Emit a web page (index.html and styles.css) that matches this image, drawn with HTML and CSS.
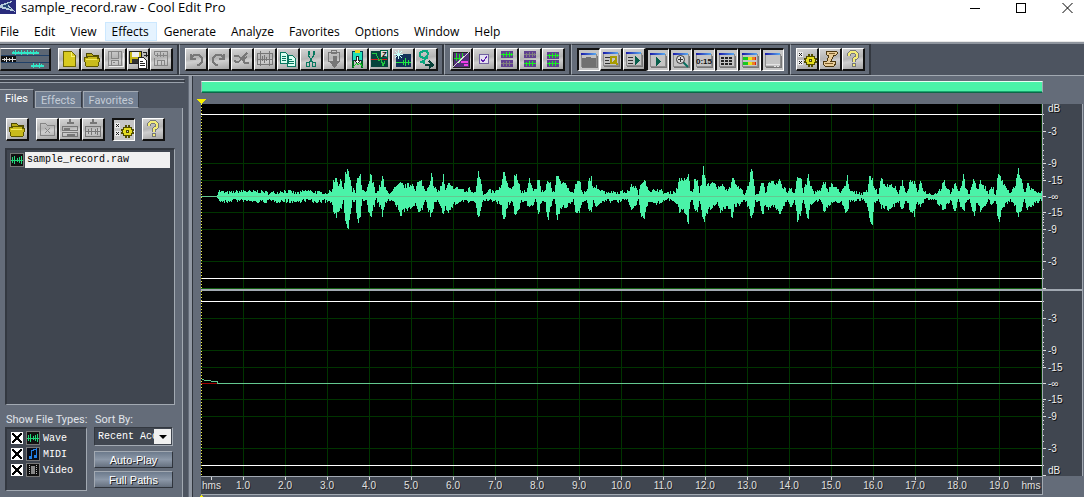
FILE: index.html
```html
<!DOCTYPE html>
<html lang="en">
<head>
<meta charset="utf-8">
<title>sample_record.raw - Cool Edit Pro</title>
<link rel="stylesheet" href="styles.css">
</head>
<body>
<svg class="defs" aria-hidden="true">
  <linearGradient id="cap"><stop offset="0" stop-color="#1818a8"/><stop offset="1" stop-color="#58a8f0"/></linearGradient>
  <symbol id="i-folder" viewBox="0 0 20 20"><path d="M4 7V4h5l2 2h5v4M4 7v9" fill="#b8aa18" stroke="#4c4700"/><path d="M2 8h3v-1h10v2h3l-2 8H4z" fill="#c9bb1c" stroke="#5c5600"/><path d="M4 10h11" stroke="#f4ea60"/></symbol>
  <symbol id="i-win" viewBox="0 0 20 20"><path d="M2.500 4.500h15v12h-15z" fill="#c4c4c4" stroke="#8c8c8c"/><path d="M3 17.500h15v-12" fill="none" stroke="#777"/><path d="M2 3h15v2H2z" fill="url(#cap)"/></symbol>
  <symbol id="i-gear" viewBox="0 0 20 20"><path d="M1 3h5v5H1zM1 11h5v5H1z" fill="#eee"/><path d="M2 4l3 3M5 4L2 7M2 12l3 3M5 12l-3 3" stroke="#222"/><path d="M9 7h2V5h1v2h2V5h1v2h2v2h2v1h-1v2h1v1h-2v2h-2v2h-1v-2h-2v2h-1v-2H9v-2H7v-1h1v-2H7V9h2z" fill="#e4dc20" stroke="#504c00"/><path d="M12 10h2v2h-2z" fill="#ccc" stroke="#504c00"/></symbol>
  <symbol id="i-help" viewBox="0 0 20 20"><path d="M6 7V5l2-2h4l2 2v3l-3 2v3" fill="none" stroke="#777" stroke-width="4"/><path d="M9 14h4v4H9z" fill="#777"/><path d="M6 7V5l2-2h4l2 2v3l-3 2v3M11 15v2" fill="none" stroke="#f4ec78" stroke-width="2"/></symbol>
  <symbol id="i-wave" viewBox="0 0 14 14"><path d="M.5.5h13v13H.5z" fill="#111" stroke="#777"/><path d="M1 7h12M2.500 4v6M4.500 3v8M7.500 5v4M9.500 4v6M11.500 3v8" stroke="#20d878" fill="none"/></symbol>
</svg>
<div class="app">
  <header class="titlebar">
    <svg class="app-icon" viewBox="0 0 16 14" aria-hidden="true"><path d="M0 0h16v14H0z" fill="#2a2c7c"/><path d="M0 5L14 0l-6 5 8 7-16-4z" fill="#b8ccdc"/><path d="M2 6l10-4-5 4 6 4z" fill="#284878"/></svg>
    <h1 class="title">sample_record.raw - Cool Edit Pro</h1>
    <div class="win-buttons">
      <button aria-label="Minimize"><svg viewBox="0 0 11 11"><path d="M0 6.500h10" stroke="#000"/></svg></button>
      <button aria-label="Maximize"><svg viewBox="0 0 11 11"><path d="M.5 1.500h9v9h-9z" fill="none" stroke="#000"/></svg></button>
      <button aria-label="Close"><svg viewBox="0 0 11 11"><path class="smooth" d="M.5 1l10 10M10.500 1L.5 11" stroke="#000"/></svg></button>
    </div>
  </header>
  <nav class="menubar">
    <button>File</button><button>Edit</button><button>View</button><button class="hot">Effects</button><button>Generate</button><button>Analyze</button><button>Favorites</button><button>Options</button><button>Window</button><button>Help</button>
  </nav>

  <div class="toolbar">
    <div class="group first">
      <button class="tool multitrack" aria-label="Multitrack view"><svg viewBox="0 0 48 20"><path d="M0 0h48v20H0z" fill="#5c6673"/><path d="M0 6.500h48M0 13.500h48" stroke="#204068"/><path d="M0 7h15v6H0z" fill="#111"/><path d="M11 3.500h27M30 16.500h13" stroke="#30e8c8" stroke-width="2"/><path d="M12.500 2v3M14.500 1v5M17.500 2v3M20.500 1v5M23.500 2v3M26.500 1v5M29.500 2v3M32.500 1v5M35.500 2v3M32.500 14v5M35.500 15v3M38.500 14v5M40.500 15v3" stroke="#30e8c8"/><path d="M1 10.500h14M3.500 9v3M5.500 8v5M8.500 9v3M11.500 8v5" stroke="#ddd"/></svg></button>
      <div class="row">
        <button class="tool" aria-label="New"><svg viewBox="0 0 20 20"><path d="M4.500 2.500h8l4 4v11h-12z" fill="#d8ca20" stroke="#6c6400"/><path d="M12 3v4h4" fill="none" stroke="#f8f070"/></svg></button>
        <button class="tool" aria-label="Open"><svg><use href="#i-folder"/></svg></button>
        <button class="tool" aria-label="Save"><svg viewBox="0 0 20 20" fill="none" stroke="#858585"><path d="M3.500 2.500h13v14h-13zM6.500 3v6h7V3M6.500 16v-5h7v5M8 13h2"/><path d="M4 17.500h14v-14" stroke="#eee"/></svg></button>
        <button class="tool" aria-label="Save as"><svg viewBox="0 0 20 20"><path d="M1.500 2.500h12v12h-12z" fill="#c8b818" stroke="#222"/><path d="M4 3h7v5H4z" fill="#eee"/><path d="M4 10h6v4H4z" fill="#333"/><path d="M10.500 8.500h5l3 3v8h-8z" fill="#fff" stroke="#222"/><path d="M12 12.500h3M12 14.500h5M12 16.500h5M15 3.500h3v4M16 6.500h4" fill="none" stroke="#222"/></svg></button>
        <button class="tool" aria-label="Save selection"><svg viewBox="0 0 20 20" fill="none" stroke="#858585"><path d="M3.500 8.500v8h13v-14h-13v3M6.500 16v-5h7v5M10.500 12v4M4 6.500h12M6.500 4v4M9.500 3v5M12.500 4v4"/></svg></button>
      </div>
    </div>
    <div class="group">
      <button class="tool" aria-label="Undo"><svg viewBox="0 0 20 20" fill="none" stroke="#777" stroke-width="2"><path d="M5 5v5h5M5 9l3-3h5l3 3v4l-3 3h-2"/></svg></button>
      <button class="tool" aria-label="Redo"><svg viewBox="0 0 20 20" fill="none" stroke="#777" stroke-width="2"><path d="M15 5v5h-5M15 9l-3-3H7l-3 3v4l3 3h2"/></svg></button>
      <button class="tool" aria-label="Repeat"><svg viewBox="0 0 20 20" fill="none" stroke="#777"><path d="M2 6.500h4l3 3h2M9 10l6-6M10 11l5-3M3 12.500h4l2-2M3 11v2M11 11l2 3h4" stroke-width="2"/></svg></button>
      <button class="tool" aria-label="Trim"><svg viewBox="0 0 20 20" fill="none" stroke="#777"><path d="M2.500 4.500h15v11h-15zM5.500 2v15M14.500 2v15M2 10.500h16M7.500 7v5M9.500 6v8M11.500 8v4"/></svg></button>
      <button class="tool" aria-label="Copy"><svg viewBox="0 0 20 20" fill="#d8fff0" stroke="#087860"><path d="M2.500 3.500h5l3 3v8h-8zM9.500 6.500h5l3 3v8h-8z"/><path d="M4 7.500h4M4 9.500h4M4 11.500h4M11 10.500h3M11 12.500h5M11 14.500h5"/></svg></button>
      <button class="tool" aria-label="Cut"><svg viewBox="0 0 20 20" fill="none" stroke="#087860"><path d="M7 2v4l5 8M13 2v4l-5 8M8 2v4M12 2v4"/><path d="M5.500 13.500h3v4h-3zM11.500 13.500h3v4h-3z"/></svg></button>
      <button class="tool" aria-label="Paste"><svg viewBox="0 0 20 20" fill="none" stroke="#777"><path d="M4.500 3.500h11v9h-11zM7.500 1.500h5v3h-5z"/><path d="M9 7h3v6h3l-4.500 5L6 13h3z" fill="#777"/></svg></button>
      <button class="tool" aria-label="Mix paste"><svg viewBox="0 0 20 20"><path d="M5.500 2.500h10v9h-10z" fill="#20e0b8" stroke="#045"/><path d="M8 1h5v3H8z" fill="#e8d820"/><path d="M9.500 7.500h2v4h2l-3 3-3-3h2z" fill="#fff" stroke="#222"/><path d="M5 12h2v7H5zM14 12h2v7h-2z" fill="#062"/><path d="M6 18l4-4 1 2 2-2 3 4" fill="none" stroke="#18c828"/></svg></button>
      <button class="tool" aria-label="Copy to new"><svg viewBox="0 0 20 20"><path d="M1 2h17v16H1z" fill="#06443c"/><path d="M1 10.500h16" stroke="#d02020"/><path d="M2 4h4l3 8 2-2 2 7 2-5" fill="none" stroke="#20c840"/><path d="M10.500 1.500h7v7h-7z" fill="#ddd" stroke="#064"/><text class="glyph" x="12" y="8">Z</text></svg></button>
      <button class="tool" aria-label="Convert sample type"><svg viewBox="0 0 20 20"><path d="M3 5h15v13H3z" fill="#103058"/><path d="M3 13.500h15M10.500 11v5M12.500 9v8M15.500 11v5" stroke="#20e840"/><path d="M1 5.500h9M5.500 1v9M2 2l7 7M9 2L2 9" stroke="#c8fff8"/></svg></button>
      <button class="tool" aria-label="Go to multitrack"><svg viewBox="0 0 20 20" fill="none" stroke="#08a880" stroke-width="2"><path d="M12 9H7L4 7V4l3-2h4l1 3-4 7-4 1M6 12l3 3"/><path d="M9 16h7M13 12l4 4-4 3" stroke="#064038"/></svg></button>
    </div>
    <div class="group">
      <button class="tool" aria-label="Spectral view"><svg viewBox="0 0 20 20"><path d="M2 3h16v15H2z" fill="#503078" stroke="#222"/><path d="M3 9.500h8M5.500 4v8M8.500 5v9M11.500 4v6" stroke="#18e020"/><path d="M10 13h7M13 16h4" stroke="#f040e8" stroke-width="2"/><path d="M2 18L18 3" stroke="#ddd"/></svg></button>
      <button class="tool" aria-label="Settings"><svg viewBox="0 0 20 20"><path d="M5.500 5.500h9v9h-9z" fill="#e4e0f0" stroke="#7060a0"/><path d="M7 10l2 3 4-6" fill="none" stroke="#6020b0"/></svg></button>
      <button class="tool" aria-label="Edit left channel"><svg viewBox="0 0 20 20"><path d="M4 2h12v7H4zM4 11h12v7H4z" fill="#604090"/><path d="M4 5.500h12M6.500 4v4M9.500 3v5M12.500 3v5M14.500 4v3" stroke="#18f020"/><path d="M4 14.500h12M6.500 13v4M9.500 12v5M12.500 12v5" stroke="#808080"/></svg></button>
      <button class="tool" aria-label="Edit right channel"><svg viewBox="0 0 20 20"><path d="M4 2h12v7H4zM4 11h12v7H4z" fill="#604090"/><path d="M4 5.500h12M6.500 4v4M9.500 3v5M12.500 3v5M14.500 4v3" stroke="#808080"/><path d="M4 14.500h12M6.500 13v4M9.500 12v5M12.500 12v5" stroke="#18f020"/></svg></button>
      <button class="tool" aria-label="Edit both channels"><svg viewBox="0 0 20 20"><path d="M4 3h12v7H4zM4 11h12v7H4z" fill="#604090"/><path d="M4 6.500h12M6.500 5v4M9.500 4v5M12.500 4v5M14.500 5v3M4 14.500h12M6.500 13v4M9.500 12v5M12.500 12v5" stroke="#18f020"/></svg></button>
    </div>
    <div class="group">
      <button class="tool pressed" aria-label="Organizer"><svg viewBox="0 0 20 20"><use href="#i-win"/><path d="M3 8h3l1-1h4l1 1h5v9H3z" fill="#707070"/></svg></button>
      <button class="tool" aria-label="Cue list"><svg viewBox="0 0 20 20"><use href="#i-win"/><path d="M4 8.500h5M4 11.500h4M4 14.500h5" stroke="#333"/><path d="M10 8h5v6h-5zM13 12l4 4" fill="none" stroke="#a89c00" stroke-width="2"/></svg></button>
      <button class="tool" aria-label="Play list"><svg viewBox="0 0 20 20"><use href="#i-win"/><path d="M4 8.500h5M4 11.500h5M4 14.500h5" stroke="#333"/><path d="M11 7l5 4-5 5z" fill="#08604c"/></svg></button>
      <button class="tool pressed" aria-label="Transport"><svg viewBox="0 0 20 20"><use href="#i-win"/><path d="M8 7l5 4-5 5z" fill="#08604c"/></svg></button>
      <button class="tool pressed" aria-label="Zoom controls"><svg viewBox="0 0 20 20"><use href="#i-win"/><path class="smooth" d="M12 12l5 5" stroke="#087060" stroke-width="2"/><circle class="smooth" cx="9.500" cy="9.500" r="4" fill="#ddd" stroke="#333"/><path d="M7 9.500h5M9.500 7v5" stroke="#333"/></svg></button>
      <button class="tool pressed" aria-label="Time window"><svg viewBox="0 0 20 20"><use href="#i-win"/><text class="glyph" x="2" y="14">0:15</text></svg></button>
      <button class="tool pressed" aria-label="Selection view"><svg viewBox="0 0 20 20"><use href="#i-win"/><path d="M4 8h3M8 8h3M12 8h3M4 11h3M8 11h3M12 11h3M4 14h3M8 14h3M12 14h3" stroke="#222" stroke-width="2"/></svg></button>
      <button class="tool pressed" aria-label="Level meters"><svg viewBox="0 0 20 20"><use href="#i-win"/><path d="M3 7h5v3H3zM3 12h5v3H3z" fill="#18c820"/><path d="M8 7h4v3H8zM8 12h4v3H8z" fill="#e8e020"/><path d="M12 7h3v3h-3zM12 12h3v3h-3z" fill="#f08020"/><path d="M15 7h1v3h-1zM15 12h1v3h-1z" fill="#d02020"/></svg></button>
      <button class="tool pressed" aria-label="Status bar"><svg viewBox="0 0 20 20"><use href="#i-win"/><path d="M3 14.500h14M11 16h2M14 16h2" stroke="#e4e4e4"/></svg></button>
    </div>
    <div class="group">
      <button class="tool" aria-label="Options"><svg><use href="#i-gear"/></svg></button>
      <button class="tool" aria-label="Scripts"><svg viewBox="0 0 20 20"><path d="M6 3l2-1h8l2 2-2 2h-2l-3 6h4l1 2-2 3H5l-2-2 1-3h3l2-6H7z" fill="#e8cc98" stroke="#4c3810"/><path d="M9 4.500h6M5 14.500h8" stroke="#80602c"/></svg></button>
      <button class="tool" aria-label="Help"><svg><use href="#i-help"/></svg></button>
    </div>
  </div>

  <div class="workspace">
    <aside class="organizer">
      <div class="grip"></div>
      <div class="tabs"><button class="tab active">Files</button><button class="tab">Effects</button><button class="tab">Favorites</button></div>
      <div class="pane">
        <div class="pane-tools">
          <button class="tool" aria-label="Open file"><svg><use href="#i-folder"/></svg></button>
          <div class="row">
            <button class="tool" aria-label="Close file"><svg viewBox="0 0 20 20" fill="none" stroke="#858585"><path d="M3.500 16.500v-12h5l2 2h7v10zM8 9l5 5M13 9l-5 5"/></svg></button>
            <button class="tool" aria-label="Insert in multitrack"><svg viewBox="0 0 20 20" fill="none" stroke="#777"><path d="M2.500 7.500h15v4h-15zM2.500 13.500h15v4h-15z"/><path d="M4 9.500h6M7 15.500h8M10 0v4M7 3.500h7" stroke-width="2"/></svg></button>
            <button class="tool" aria-label="Edit file"><svg viewBox="0 0 20 20" fill="none" stroke="#777"><path d="M2.500 7.500h15v10h-15zM3 12.500h14M5.500 10v5M8.500 9v7M12.500 10v5M14.500 9v7"/><path d="M10 0v4M7 3.500h7" stroke-width="2"/></svg></button>
          </div>
          <button class="tool pressed" aria-label="Advanced options"><svg><use href="#i-gear"/></svg></button>
          <button class="tool" aria-label="Help"><svg><use href="#i-help"/></svg></button>
        </div>
        <ul class="files well">
          <li><svg class="type"><use href="#i-wave"/></svg><span>sample_record.raw</span></li>
        </ul>
        <div class="filters">
          <fieldset>
            <legend>Show File Types:</legend>
            <div class="types well">
              <label><input type="checkbox" checked><svg class="type"><use href="#i-wave"/></svg>Wave</label>
              <label><input type="checkbox" checked><svg class="type" viewBox="0 0 14 14"><path d="M.5.5h13v13H.5z" fill="#080c18" stroke="#777"/><path d="M5 11V4l5-2v7" fill="none" stroke="#2080e8"/><path d="M3 9h3v3H3zM8 8h3v3H8z" fill="#2080e8"/></svg>MIDI</label>
              <label><input type="checkbox" checked><svg class="type" viewBox="0 0 14 14"><path d="M.5.5h13v13H.5z" fill="#111" stroke="#777"/><path d="M5 3h4v8H5z" fill="#888"/><path d="M3.500 2v10M10.500 2v10" stroke="#bbb" stroke-dasharray="1 1"/></svg>Video</label>
            </div>
          </fieldset>
          <div class="sorting">
            <label for="sort">Sort By:</label>
            <div class="combo"><select id="sort"><option>Recent Access</option><option>Name</option></select><span class="arrow"></span></div>
            <button class="wide">Auto-Play</button>
            <button class="wide">Full Paths</button>
          </div>
        </div>
      </div>
    </aside>

    <main class="editor">
      <div class="overview"></div>
      <div class="cursor-row"><svg viewBox="0 0 9 5"><path d="M0 0h9L4.500 5z" fill="#f8f000"/></svg></div>
      <div class="track">
        <svg class="plot" id="left" viewBox="0 0 841 185" preserveAspectRatio="none"></svg>
        <svg class="scale" viewBox="0 0 40 185"></svg>
      </div>
      <div class="track">
        <svg class="plot" id="right" viewBox="0 0 841 185" preserveAspectRatio="none"></svg>
        <svg class="scale" viewBox="0 0 40 185"></svg>
      </div>
      <div class="timeline" id="timeline"></div>
      <div class="cursor-row bottom"><svg viewBox="0 0 9 5"><path d="M4.500 0L9 5H0z" fill="#f8f000"/></svg></div>
    </main>
  </div>
</div>
<script src="app.js"></script>
</body>
</html>
```
FILE: styles.css
```css
* { box-sizing: border-box; }
body { margin: 0; background: #646c79; font-family: "Open Sans", sans-serif; font-size: 12px; overflow: hidden; }
button { font: inherit; color: inherit; border: 0; background: none; padding: 0; }
h1, ul, fieldset, legend { margin: 0; padding: 0; border: 0; font-size: inherit; font-weight: inherit; list-style: none; }
svg { display: block; shape-rendering: crispEdges; }
.smooth { shape-rendering: auto; }
.glyph { font: bold 8px "Liberation Sans", sans-serif; fill: #111; }
.defs { position: absolute; width: 0; height: 0; }
.app { display: flex; flex-direction: column; min-height: 100vh; }
.row { display: flex; }

.titlebar { display: flex; align-items: center; height: 22px; background: #fff; padding-bottom: 8px; }
.app-icon { width: 16px; height: 14px; }
.title { flex: 1; padding-left: 5px; font-size: 13px; line-height: 14px; color: #000; }
.win-buttons { display: flex; gap: 35px; padding-right: 11px; }
.win-buttons svg { width: 11px; height: 11px; }

.menubar { display: flex; background: #fff; height: 20px; border-bottom: 1px solid #e8e8e8; color: #000; }
.menubar button { padding: 0 7px 0 6px; line-height: 19px; border: 1px solid transparent; border-width: 0 1px 1px; }
.menubar button:first-child { padding-left: 0; border-left: 0; }
.menubar .hot { background: #e5f3ff; border: 1px solid #cce8ff; line-height: 17px; }

.toolbar { display: flex; height: 34px; background: #4d5460; border-top: 2px solid #8f959e; border-bottom: 1px solid #a2a9b2; }
.group { display: flex; align-items: center; padding: 0 4px 0 5px; background: #646c79; border-top: 1px solid #363b43; border-left: 1px solid #a2a9b2; border-right: 2px solid #333840; border-bottom: 1px solid #333840; }
.group.first { gap: 7px; padding-left: 0; border-left: 0; }
.tool { display: block; flex: none; width: 23px; height: 23px; border: 1px solid #fff; border-right: 2px solid #111; border-bottom: 2px solid #111; background: linear-gradient(170deg, #d4d4d4, #b4b4b4 45%, #cfcfcf 60%, #a4a4a4); }
.tool svg { width: 20px; height: 20px; }
.tool.pressed { border: 1px solid #fff; border-left: 2px solid #111; border-top: 2px solid #111; background: #c6c6c6; }
.multitrack { width: 51px; border-left-color: #999; }
.multitrack svg { width: 48px; }

.workspace { display: flex; flex: 1; }
.organizer { display: flex; flex-direction: column; flex: none; width: 188px; background: #4d5460; padding-right: 5px; color: #e0e4ea; }
.grip { height: 4px; margin: 3px -2px 0 0; border: 1px solid #9aa1ab; border-left: 0; border-right-color: #333840; background: #3c424c; }
.tabs { display: flex; align-items: flex-end; gap: 1px; height: 25px; padding-top: 7px; font: 11px Roboto, sans-serif; }
.tab { height: 17px; padding: 0 5px; line-height: 18px; color: #c4ccd6; background: #717e91; border: 1px solid #a2a9b2; border-right-color: #363b43; border-bottom-color: #a2a9b2; }
.tab.active { height: 19px; background: #646c79; border-bottom: 0; border-left: 0; color: #fff; }
.pane { display: flex; flex-direction: column; flex: 1; padding: 10px 7px 4px 5px; background: #646c79; border-right: 1px solid #a2a9b2; border-bottom: 1px solid #333840; }
.pane-tools { display: flex; gap: 7px; padding-left: 1px; }
.well { background: #404650; border: 2px solid #a2a9b2; border-top-color: #333840; border-left-color: #333840; border-right-width: 1px; border-bottom-width: 1px; }
.files { height: 257px; margin-top: 7px; padding: 2px 4px 0 3px; font: 10px/14px "Liberation Mono", monospace; }
.files li { display: flex; align-items: center; gap: 1px; }
.files span { flex: 1; padding: 1px 2px; background: #f0f0f0; color: #000; }
.type { width: 14px; height: 14px; }
.filters { display: grid; grid-template-columns: 82px 79px; gap: 7px; margin-top: 7px; font: 11px/15px Roboto, sans-serif; }
.filters fieldset { min-width: 0; }
.filters legend { line-height: 15px; white-space: nowrap; padding-left: 1px; }
.types { display: flex; flex-direction: column; gap: 2px; padding: 2px 4px; height: 64px; font: 10px/15px "Liberation Mono", monospace; color: #fff; }
.types label { display: flex; align-items: center; gap: 3px; height: 14px; }
.types input { appearance: none; width: 12px; height: 12px; margin: 0; background: #fff; border: 1px solid #fff; }
.types input:checked { background: linear-gradient(45deg, transparent 43%, #000 43%, #000 57%, transparent 57%), linear-gradient(135deg, #fff 43%, #000 43%, #000 57%, #fff 57%); }
.sorting { display: flex; flex-direction: column; }
.sorting > label { padding-left: 1px; }
.combo { display: grid; height: 19px; margin-bottom: 5px; border: 1px solid #a2a9b2; border-top-color: #333840; border-left-color: #333840; background: #404650; }
.combo select { grid-area: 1 / 1; width: 100%; height: 17px; appearance: none; border: 0; border-radius: 0; padding: 0 18px 0 3px; background: none; color: #fff; font: 10px/17px "Liberation Mono", monospace; outline: 0; }
.arrow { grid-area: 1 / 1; justify-self: end; display: grid; place-items: center; width: 17px; height: 15px; margin: 1px; background: #f0f0f0; pointer-events: none; }
.arrow::after { content: ""; border: 4px solid transparent; border-top-color: #000; border-bottom: 0; }
.wide { height: 17px; margin-bottom: 3px; border: 1px solid #a2a9b2; border-right-color: #30353d; border-bottom-color: #30353d; background: linear-gradient(#6c7a8c, #8c98a8 50%, #66707f); color: #fff; font: 11px/14px "Liberation Sans", sans-serif; text-shadow: 1px 1px #222; }

.editor { flex: 1; min-width: 0; margin-left: 1px; padding: 5px 1px 0 9px; background: #646c79; border-left: 3px solid #9299a4; box-shadow: inset 1px 0 #30353d; }
.overview { height: 12px; margin-right: 40px; background: #4af3a8; border: 1px solid #a2a9b2; border-top-color: #e8fff4; border-bottom-color: #0c6848; box-shadow: inset 0 -1px #18a870; }
.cursor-row { height: 11px; display: flex; align-items: flex-end; }
.cursor-row svg { width: 9px; height: 5px; margin-left: -4px; }
.cursor-row.bottom { height: 5px; }
.track { display: flex; border-right: 1px solid #a2a9b2; background: #404650; }
.track + .track { border-top: 2px solid #a2a9b2; }
.plot { flex: 1; min-width: 0; height: 185px; background: #000; }
.scale { flex: none; width: 40px; height: 185px; }
.scale text { font: 10px "Liberation Sans", sans-serif; fill: #eee; text-shadow: 1px 1px #111; }
.timeline { display: grid; grid-template-columns: 21fr repeat(19, 42fr) 22fr; height: 19px; margin-right: 40px; background: #404650; border: 1px solid #a2a9b2; border-left: 0; color: #e0e0e0; font: 10px/12px "Liberation Sans", sans-serif; text-align: center; text-shadow: 1px 1px #222; }
.timeline span::before { content: ""; display: block; width: 1px; height: 3px; margin: 0 auto; background: #ddd; }
.timeline span { min-width: 0; }
```
FILE: app.js
```js
const NS = "http://www.w3.org/2000/svg";

function add(parent, name, attrs, text) {
  const el = document.createElementNS(NS, name);
  for (const key in attrs) el.setAttribute(key, attrs[key]);
  if (text) el.textContent = text;
  parent.appendChild(el);
}

// Half-height of a track is 0 dB; every level sits at its linear amplitude.
const MID = 92;
const offset = db => Math.round(92 * Math.pow(10, -db / 20));

// Peak envelope: position, height above the axis, depth below it.
const peaks = `16 0 0;17 5 3;18 5 4;24 3 5;32 4 3;44 5 4;50 4 4;56 5 5;69 3 4;84 5 4;95 3 5;106 5 3;114 4 5;124 3 4;130 4 5;132 14 13;135 20 20;137 11 14;140 15 13;142 7 5;144 22 22;147 24 31;149 16 17;151 3 3;152 7 4;154 3 3;156 19 25;159 19 18;161 5 3;165 4 3;167 11 15;169 21 21;172 12 10;175 3 3;179 10 10;181 18 19;184 7 5;187 3 3;191 5 4;195 9 9;199 12 17;203 10 13;209 11 12;212 12 11;214 5 5;216 13 13;220 14 13;224 5 4;227 10 14;230 21 19;233 7 7;237 5 4;240 10 12;242 20 16;244 5 8;247 12 17;250 9 10;255 8 6;261 7 4;265 3 3;268 9 6;271 3 3;274 5 8;277 26 20;279 18 15;282 1 3;289 5 4;294 4 4;299 8 7;303 24 24;305 15 15;307 7 6;311 9 5;314 23 19;317 15 14;320 3 3;324 4 4;328 17 11;331 7 8;334 5 3;337 17 17;340 6 6;343 4 4;347 16 21;349 13 10;351 4 4;353 5 3;356 22 23;359 15 12;364 11 10;369 6 7;372 4 3;375 14 17;378 15 14;381 3 3;385 4 4;388 17 13;390 18 15;392 6 5;395 9 8;399 7 7;404 4 3;409 4 4;419 4 4;426 4 3;431 11 13;434 9 8;437 3 3;440 12 18;443 19 22;445 12 10;449 3 4;454 7 8;459 5 5;465 3 3;473 4 4;476 8 8;478 19 15;481 14 14;484 17 16;487 20 24;489 6 5;491 4 4;494 19 16;496 14 14;498 5 4;500 11 14;502 27 25;505 12 16;509 12 11;513 12 8;516 7 6;519 12 14;523 8 11;527 7 10;529 10 12;531 21 23;533 14 9;538 8 7;543 3 3;547 9 9;550 28 20;552 16 14;554 2 3;557 3 4;561 15 19;564 5 8;568 12 11;571 13 10;575 12 11;579 15 17;582 8 10;586 4 3;589 9 10;593 3 3;596 19 22;599 18 19;602 5 3;604 10 13;607 20 20;609 10 8;613 4 4;619 5 3;623 14 14;627 6 10;630 12 7;634 8 5;639 5 4;644 9 14;646 19 16;648 6 4;654 3 3;661 3 3;666 6 8;669 22 26;671 15 25;673 8 5;677 3 3;680 17 11;683 12 10;689 11 13;693 9 8;697 3 4;701 14 12;704 3 3;710 15 14;713 13 17;716 4 4;719 17 11;721 7 5;725 3 2;733 2 3;739 6 8;742 16 13;746 8 7;749 4 4;754 11 13;757 4 3;760 11 12;762 21 15;765 5 4;768 3 3;771 13 14;773 18 17;776 6 5;779 14 13;783 9 8;787 3 3;791 9 8;794 2 3;797 23 25;801 14 12;805 8 6;809 3 3;813 8 8;817 25 18;820 16 12;823 3 3;826 12 12;830 7 8;835 4 5;841 5 3`
  .split(";").map(p => p.split(" ").map(Number));

function envelopePath() {
  let d = "", seed = 7;
  const jitter = v => {
    seed = (seed * 16807) % 2147483647;
    const r = seed / 2147483647;
    return Math.max(1, Math.round(v * (0.92 + 0.16 * r) + 3 * r - 1.5));
  };
  for (let i = 0; i < peaks.length - 1; i++) {
    const [x0, u0, l0] = peaks[i], [x1, u1, l1] = peaks[i + 1];
    for (let x = x0; x < x1; x++) {
      const t = (x - x0) / (x1 - x0), s = t * t * (3 - 2 * t);
      const up = jitter(u0 + (u1 - u0) * s), low = jitter(l0 + (l1 - l0) * s);
      d += `M${x} ${MID - up}h1v${up + low + 1}h-1z`;
    }
  }
  return d;
}

function drawGrid(svg) {
  let d = "";
  for (let x = 42; x < 841; x += 42) d += `M${x}.5 0V185`;
  for (const db of [3, 9, 15]) for (const s of [-1, 1]) d += `M0 ${MID + s * offset(db) + 0.5}H841`;
  add(svg, "path", { d, stroke: "#003400", fill: "none" });
  add(svg, "path", { d: "M0 10.500H841M0 174.500H841", stroke: "#fff" });
}

function drawEdge(svg) {
  add(svg, "path", { d: "M.5 0V185", stroke: "#f0f040", "stroke-dasharray": "1 2" });
}

const left = document.getElementById("left");
drawGrid(left);
add(left, "path", { d: envelopePath(), fill: "#4af3a8" });
add(left, "path", { d: "M0 92.500H841", stroke: "#64c890" });
add(left, "path", { d: "M0 184.500H841", stroke: "#105c10" });
drawEdge(left);

const right = document.getElementById("right");
drawGrid(right);
add(right, "path", { d: "M0 92.500H16", stroke: "#a00000" });
add(right, "path", { d: "M1 88.500H3M3 89.500H10M10 90.500H16M16.500 90V93M16 92.500H841", stroke: "#64c890" });
drawEdge(right);

document.querySelectorAll(".scale").forEach((svg, i) => {
  let d = "";
  for (let db = 1; db <= 15; db++) {
    const len = [3, 9, 15].includes(db) ? 3 : 1;
    for (const s of [-1, 1]) d += `M1 ${MID + s * offset(db) + 0.5}h${len}`;
  }
  add(svg, "path", { d: d + "M1 92.500h3M1 184.500h3", stroke: "#ddd" });
  add(svg, "path", { d: "M.5 0V185", stroke: "#a2a9b2" });
  for (const db of [3, 9, 15]) for (const s of [-1, 1]) add(svg, "text", { x: 6, y: MID + s * offset(db) + 4 }, "-" + db);
  add(svg, "text", { x: 6, y: MID + 4 }, "-∞");
  add(svg, "text", { x: 6, y: i ? 183 : 8 }, "dB");
});

const timeline = document.getElementById("timeline");
for (let i = 0; i <= 20; i++) {
  const label = document.createElement("span");
  label.textContent = i % 20 ? i + ".0" : "hms";
  timeline.appendChild(label);
}
```
